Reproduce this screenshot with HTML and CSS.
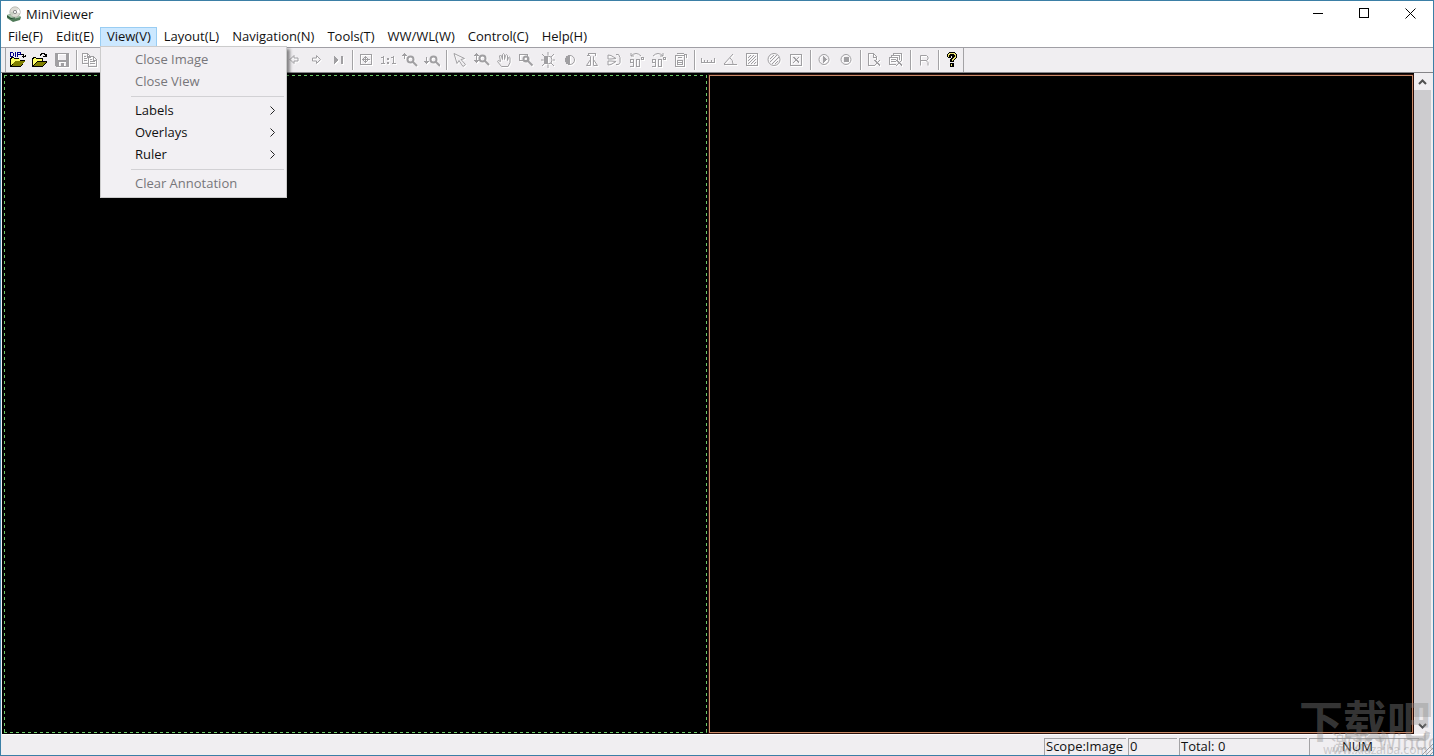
FILE: index.html
```
<!DOCTYPE html>
<html lang="en">
<head>
<meta charset="utf-8">
<title>MiniViewer</title>
<link rel="stylesheet" href="styles.css">
</head>

<body>

<div id="window">

	<div id="titlebar">
		<svg class="logo" width="16" height="16" viewBox="0 0 16 16">
			<path d="M1 9 L9 7 L15 11 L14 14 L7 16 L1 12z" fill="#4f7a58"/>
			<path d="M1 9 L9 8 L15 11 L7 13z" fill="#a9c7ad"/>
			<circle cx="9" cy="6" r="5.2" fill="#deddd6" stroke="#a9aaa2" stroke-width=".7"/>
			<path d="M9 6 L13 3 L14 7z" fill="#fff"/>
			<path d="M9 6 L4 6 L6 10z" fill="#c6cec1"/>
			<circle cx="9" cy="6" r="1.6" fill="#fff" stroke="#888"/>
			<path d="M1 10 q3 4 8 2" fill="none" stroke="#234c30"/>
		</svg>
		<h1>MiniViewer</h1>
		<button type="button" aria-label="Minimize"><svg width="11" height="11"><path d="M0 5.5h10"/></svg></button>
		<button type="button" aria-label="Maximize"><svg width="11" height="11"><path d="M.5 .5h9v9h-9z"/></svg></button>
		<button type="button" aria-label="Close"><svg width="11" height="11"><path class="smooth" d="M.5 .5l10 10M10.5 .5l-10 10"/></svg></button>
	</div>

	<ul id="menubar">
		<li><a href="#">File(F)</a></li>
		<li><a href="#">Edit(E)</a></li>
		<li class="open"><a href="#">View(V)</a>
			<ul>
				<li class="off"><a href="#">Close Image</a></li>
				<li class="off"><a href="#">Close View</a></li>
				<li class="line"></li>
				<li><a href="#">Labels<svg width="5" height="9"><path d="M.5 .5l4 4l-4 4"/></svg></a></li>
				<li><a href="#">Overlays<svg width="5" height="9"><path d="M.5 .5l4 4l-4 4"/></svg></a></li>
				<li><a href="#">Ruler<svg width="5" height="9"><path d="M.5 .5l4 4l-4 4"/></svg></a></li>
				<li class="line"></li>
				<li class="off"><a href="#">Clear Annotation</a></li>
			</ul>
		</li>
		<li><a href="#">Layout(L)</a></li>
		<li><a href="#">Navigation(N)</a></li>
		<li><a href="#">Tools(T)</a></li>
		<li><a href="#">WW/WL(W)</a></li>
		<li><a href="#">Control(C)</a></li>
		<li><a href="#">Help(H)</a></li>
	</ul>

	<div id="toolbar">
		<div class="tools">
			<button type="button" class="on" aria-label="Open folder"><svg viewBox="0 0 16 16">
				<path class="k" d="M0 6h1v-1h3v1h5v2h6v1l-4 6H0z"/><path d="M1 7h1v-1h2v1h6v2H5L1 13z" fill="#ff6"/><path d="M5 9h10l-4 5H2z" fill="#808000"/>
				<path d="M.5 0v5M1 .5h2M3.500 1v3M1 4.500h2M5.500 0v5M7.500 5V.5h3M8 2.500h2M10.500 1v2" stroke="#008" fill="none"/>
				<path d="M11 2.500h2.500v3M12 4.500h4M15.500 3v2" stroke="#000" fill="none"/></svg></button>
			<button type="button" class="on" aria-label="Open file"><svg viewBox="0 0 16 16">
				<path class="k" d="M0 6h1v-1h3v1h7v3h4v1l-4 5H0z"/><path d="M1 7h1v-1h2v1h6v2H5L1 13z" fill="#ff6"/><path d="M5 10h9l-4 4H2z" fill="#808000"/>
				<path d="M8.500 3.500v-1h1v-1h3v1h1v2M11 4.500h4M14.500 2v3" stroke="#000" fill="none"/></svg></button>
			<button type="button" aria-label="Save"><svg viewBox="0 0 16 16"><path class="f" fill-rule="evenodd" d="M1 1h14v14H2l-1-1zM4 2v6h8V2zM5 10v4h2v-3h3v3h2v-4z"/></svg></button>
			<i></i>
			<button type="button" aria-label="Copy"><svg viewBox="0 0 16 16"><path d="M6 11.500H.5v-10h5l3 3M5.500 2v3h3M2 4.500h2M2 6.500h3M2 8.500h3M6.500 4.500h5l3 3v7h-8zM11.500 5v3h3M8 7.500h2M8 9.500h5M8 11.500h5"/></svg></button>
			<button type="button" aria-label="Single view"><svg viewBox="0 0 16 16"><path d="M1.500 1.500h12v12h-12z"/></svg></button>
			<button type="button" aria-label="Two columns"><svg viewBox="0 0 16 16"><path d="M1.500 1.500h12v12h-12zM7.500 2v12"/></svg></button>
			<button type="button" aria-label="Two rows"><svg viewBox="0 0 16 16"><path d="M1.500 1.500h12v12h-12zM2 7.500h12"/></svg></button>
			<button type="button" aria-label="Four views"><svg viewBox="0 0 16 16"><path d="M1.500 1.500h12v12h-12zM2 7.500h12M7.500 2v12"/></svg></button>
			<button type="button" aria-label="Tile"><svg viewBox="0 0 16 16"><path d="M1.500 1.500h12v12h-12zM2 5.500h12M2 9.500h12"/></svg></button>
			<button type="button" aria-label="Page up"><svg viewBox="0 0 16 16"><path d="M3 8l5-5l5 5"/></svg></button>
			<button type="button" aria-label="Page down"><svg viewBox="0 0 16 16"><path d="M3 6l5 5l5-5"/></svg></button>
			<i></i>
			<button type="button" aria-label="First"><svg viewBox="0 0 16 16"><path class="f" d="M3 4h2v8H3zM12 4v8L7 8z"/></svg></button>
			<button type="button" aria-label="Previous"><svg viewBox="0 0 16 16"><path class="s" d="M4 7.500l4-4v2.500h4v3h-4v2.500z"/></svg></button>
			<button type="button" aria-label="Next"><svg viewBox="0 0 16 16"><path class="s" d="M12.500 7.500l-4-4v2.500h-4v3h4v2.500z"/></svg></button>
			<button type="button" aria-label="Last"><svg viewBox="0 0 16 16"><path class="f" d="M4 4v8l5-4zM11 4h2v8h-2z"/></svg></button>
			<i></i>
			<button type="button" aria-label="Fit to window"><svg viewBox="0 0 16 16"><path d="M2.500 2.500h11v10h-11zM4 7.500h8M7.500 4v7"/><path class="f" d="M5 6h1v3H5zM9 6h1v3H9zM6 5h3v1H6zM6 9h3v1H6z"/></svg></button>
			<button type="button" aria-label="Actual size"><svg viewBox="0 0 16 16"><path d="M1 5.500h2M3.500 4v8M13.500 4v8M11 5.500h2"/><path class="f" d="M7 6h2v2H7zM7 10h2v2H7zM1 11h4v1H1zM12 11h4v1h-4z"/></svg></button>
			<button type="button" aria-label="Zoom in"><svg viewBox="0 0 16 16"><path d="M2.500 1v6M1 2.500h3M0 3.500h5"/><circle class="t" cx="8.500" cy="7.500" r="3"/><path class="t" d="M11 10l4 4"/></svg></button>
			<button type="button" aria-label="Zoom out"><svg viewBox="0 0 16 16"><path d="M2.500 5v7M1 10.500h3M0 9.500h5"/><circle class="t" cx="9.500" cy="7.500" r="3"/><path class="t" d="M12 10l4 4"/></svg></button>
			<i></i>
			<button type="button" aria-label="Select"><svg viewBox="0 0 16 16"><path class="s" d="M2 1.500l3 10l2-3l4 6l2.500-2l-4.500-5l3.500-1z"/></svg></button>
			<button type="button" aria-label="Zoom"><svg viewBox="0 0 16 16"><path d="M2.500 1v10M1 2.500h3M0 3.500h5M0 8.500h5M1 9.500h3"/><circle class="t" cx="8.500" cy="6.500" r="3"/><path class="t" d="M11 9l4 4"/></svg></button>
			<button type="button" aria-label="Pan"><svg viewBox="0 0 16 16"><path class="s" d="M5.500 14.500l-4-5q0-2 3 0L3.500 4q1-2 2 0l1 3.500V2.500q1-2 2 0v5l1-4q1-2 2 0v5l1-3q1-1 1.500 0v5l-2 4z"/></svg></button>
			<button type="button" aria-label="Zoom region"><svg viewBox="0 0 16 16"><path d="M1.500 2.500h8v6h-8z"/><circle class="t" cx="8" cy="7" r="2.500"/><path class="t" d="M10 9l4.500 4.500"/></svg></button>
			<button type="button" aria-label="Brightness"><svg viewBox="0 0 16 16"><circle class="s" cx="8" cy="8" r="4"/><path class="f" d="M8 3.500a4.500 4.500 0 0 0 0 9z"/><path class="s" d="M8 0v3M8 13v3M1 8h2M13 8h2M2 2l3 3M11 11l3 3M2 14l3-3M11 5l3-3"/></svg></button>
			<button type="button" aria-label="Contrast"><svg viewBox="0 0 16 16"><circle class="s" cx="8" cy="8" r="4.500"/><path class="f" d="M8 3a5 5 0 0 0 0 10z"/></svg></button>
			<button type="button" aria-label="Flip horizontally"><svg viewBox="0 0 16 16"><path d="M4.500 4v-2.500h7v2.500M3 3.500h3"/><path class="s" d="M6.500 4.500v3l-4 6h4zM9.500 4.500v3l4 6h-4z"/></svg></button>
			<button type="button" aria-label="Flip vertically"><svg viewBox="0 0 16 16"><path class="s" d="M2 3v4h3l5-.5L5 3.500zM2 13v-4h3l5 .5L5 12.500zM10 2.500h2.500l1.500 3v5l-1.500 2H10"/></svg></button>
			<button type="button" aria-label="Rotate left"><svg viewBox="0 0 16 16"><path class="s" d="M3 4q5-5 10 0M3 1v3h3"/><path d="M2.500 7.500h3v3h-3zM5.500 10v4.500H2M8.500 7.500h3v7h-3zM13.500 5.500h2v2h-2z"/></svg></button>
			<button type="button" aria-label="Rotate right"><svg viewBox="0 0 16 16"><path class="s" d="M3 4q5-5 10 0M13 1v3h-3"/><path d="M2.500 7.500h3v3h-3zM5.500 10v4.500H2M8.500 7.500h3v7h-3zM13.500 5.500h2v2h-2z"/></svg></button>
			<button type="button" aria-label="Reset"><svg viewBox="0 0 16 16"><path d="M3.500 3.500h9v11h-9zM5 1.500h7M12 2.500h2v3M6 5.500h4M5.500 8.500h5v4h-5zM6 10.500h4"/></svg></button>
			<i></i>
			<button type="button" aria-label="Length"><svg viewBox="0 0 16 16"><path d="M1.500 6v4.500h13V6M4.500 8v2M7.500 8v2M11.500 8v2"/></svg></button>
			<button type="button" aria-label="Angle"><svg viewBox="0 0 16 16"><path d="M2 12.500h13"/><path class="s" d="M2 12L11 2M8 6q3 2 3 6"/></svg></button>
			<button type="button" aria-label="Rectangle"><svg viewBox="0 0 16 16"><path d="M2.500 1.500h11v12h-11z"/><path class="s" d="M4 6l3-3M4 9l6-6M4 12l8-8M7 12l5-5M10 12l2-2"/></svg></button>
			<button type="button" aria-label="Ellipse"><svg viewBox="0 0 16 16"><circle class="s" cx="8" cy="7.500" r="6"/><path class="s" d="M4 7l4-4M4 10l7-7M6 12l7-7M9 12l3-3"/></svg></button>
			<button type="button" aria-label="Delete mark"><svg viewBox="0 0 16 16"><path d="M2.500 2.500h11v11h-11z"/><path class="s" d="M5 5l6 6M6 5l5 5M11 5l-6 6"/></svg></button>
			<i></i>
			<button type="button" aria-label="Play"><svg viewBox="0 0 16 16"><circle class="s" cx="8" cy="7.500" r="5"/><path class="f" d="M7 4v7l4-3.500z"/></svg></button>
			<button type="button" aria-label="Stop"><svg viewBox="0 0 16 16"><circle class="s" cx="8" cy="7.500" r="5"/><path class="f" d="M6 5h5v5H6z"/></svg></button>
			<i></i>
			<button type="button" aria-label="Close image"><svg viewBox="0 0 16 16"><path d="M8 13.500H2.500v-12h5l3 3v3M7.500 2v3h3"/><path class="s" d="M8 8l6 6M9 8l5 5M14 8l-6 6"/></svg></button>
			<button type="button" aria-label="Close all"><svg viewBox="0 0 16 16"><path d="M5 3.500v-2h8v7M3 5.500v-2h8v4M8 12.500H1.500v-7h8v3M3 7.500h5M3 9.500h5"/><path class="s" d="M8 8l6 6M9 8l5 5M14 8l-6 6"/></svg></button>
			<i></i>
			<button type="button" aria-label="Reset all"><svg viewBox="0 0 16 16"><path class="s" d="M4.500 13.500v-10h6l1.500 1.500v2l-1.500 1.500h-6M10 8.500l2 2v3"/></svg></button>
			<i></i>
			<button type="button" class="on" aria-label="Help"><svg viewBox="0 0 16 16"><path class="k" d="M5 0h6v1h1v1h1v4h-1v1h-1v1h-1v2H6V7h1V6h1V4H7v2H4V5H3V2h1V1h1zM6 11h4v4H6z"/><path d="M4.500 4.500v-2h1v-1h5v1h1v3h-1v1h-1v1h-1v1.500M7.500 12v2" stroke="#e8e070" fill="none"/></svg></button>
		</div>
	</div>

	<div id="views">
		<div class="view focus"></div>
		<div class="view active"></div>
		<div class="scrollbar">
			<button type="button" aria-label="Scroll up"><svg width="9" height="6"><path d="M1 5l3.500-3.500L8 5"/></svg></button>
			<button type="button" aria-label="Scroll down"><svg width="9" height="6"><path d="M1 1l3.500 3.500L8 1"/></svg></button>
		</div>
	</div>

	<div id="statusbar">
		<span class="scope">Scope:Image</span>
		<span class="index">0</span>
		<span class="total">Total: 0</span>
		<span class="num">NUM</span>
		<svg class="grip" width="12" height="12"><path d="M1 12L12 1M5 12l7-7M9 12l3-3"/></svg>
	</div>

	<div id="watermark">
		<div class="name">下载吧</div>
		<div class="activate">激活 Windows</div>
		<div class="site">www.xiazaiba.com</div>
	</div>

</div>

</body>
</html>
```
FILE: styles.css
```
* {
	box-sizing: border-box;
}

body {
	margin: 0;
	font: 13px/18px "Open Sans", "Noto Sans CJK SC", sans-serif;
	color: #111;
}

button {
	display: flex;
	align-items: center;
	justify-content: center;
	padding: 0;
	border: 0;
	background: none;
}

svg {
	flex: none;
	fill: none;
	shape-rendering: crispEdges;
}

#window {
	position: relative;
	display: flex;
	flex-direction: column;
	height: 100vh;
	overflow: hidden;
	border: 1px solid #3b7fa6;
	background: #f0eef1;
}

/* title bar */

#titlebar {
	display: flex;
	align-items: center;
	height: 25px;
	padding-left: 5px;
	background: #fff;
}

#titlebar .logo {
	shape-rendering: auto;
}

h1 {
	flex: 1;
	margin: 0 0 0 4px;
	font-size: 13px;
	font-weight: normal;
}

#titlebar button {
	width: 46px;
	height: 25px;
}

#titlebar button path {
	stroke: #000;
}

#titlebar .smooth {
	shape-rendering: auto;
}

/* menus */

ul {
	margin: 0;
	padding: 0;
	list-style: none;
}

a {
	color: #111;
	text-decoration: none;
}

#menubar {
	display: flex;
	height: 22px;
	padding-top: 1px;
	background: #fff;
	border-bottom: 1px solid #a09fa5;
}

#menubar > li {
	position: relative;
}

#menubar > li > a {
	display: block;
	height: 20px;
	padding: 0 6px 0 7px;
}

#menubar > .open > a {
	padding: 0 5px 0 6px;
	border: 1px solid #99cdf3;
	line-height: 16px;
	background: #cce8ff;
}

#menubar ul {
	position: absolute;
	z-index: 2;
	top: 19px;
	left: 0;
	width: 187px;
	padding: 2px;
	border: 1px solid #ccc;
	background: #f2f0f3;
	box-shadow: 3px 3px 3px rgba(0, 0, 0, .45);
}

#menubar ul a {
	display: flex;
	align-items: center;
	justify-content: space-between;
	height: 22px;
	padding: 0 9px 2px 32px;
}

#menubar ul .off a {
	color: #77767a;
}

#menubar ul svg {
	stroke: #222;
	shape-rendering: auto;
}

.line {
	height: 1px;
	margin: 3px 0 3px 28px;
	background: #d2d1d4;
}

/* toolbar */

#toolbar {
	height: 25px;
	border-bottom: 1px solid #858488;
}

.tools {
	display: flex;
	align-items: center;
	width: max-content;
	height: 24px;
	padding-left: 1px;
	margin-left: 4px;
	border-left: 1px solid #a3a2a5;
	border-right: 1px solid #a3a2a5;
}

.tools button {
	width: 22px;
	height: 22px;
}

.tools i {
	width: 2px;
	height: 20px;
	margin: 0 1px 0 3px;
	border-left: 1px solid #a3a2a5;
	border-right: 1px solid #fff;
}

.tools svg {
	width: 16px;
	height: 16px;
	stroke: #a09fa2;
	filter: drop-shadow(1px 1px 0 #fff);
}

.tools .on svg {
	stroke: none;
	filter: none;
}

.tools .f {
	fill: #a09fa2;
	stroke: none;
}

.tools .k {
	fill: #000;
}

.tools .s,
.tools circle {
	shape-rendering: auto;
}

.tools .t {
	stroke-width: 2px;
	shape-rendering: auto;
}

/* image views */

#views {
	flex: 1;
	display: flex;
	margin: 0 2px 0 1px;
	background: #000;
	border-bottom: 1px solid #fff;
}

.view {
	flex: 1;
	margin: 2px 1px 1px 2px;
	border: 1px solid #c98a68;
	background: #000;
}

/* border-style can not give dashes of 3px on, 3px off */
.view.focus {
	border: 0;
	background:
		repeating-linear-gradient(to right, #6cc767 0 3px, #000 3px 6px) top / 100% 1px no-repeat,
		repeating-linear-gradient(to right, #6cc767 0 3px, #000 3px 6px) bottom / 100% 1px no-repeat,
		repeating-linear-gradient(to bottom, #6cc767 0 3px, #000 3px 6px) left / 1px 100% no-repeat,
		repeating-linear-gradient(to bottom, #6cc767 0 3px, #000 3px 6px) right / 1px 100% no-repeat,
		#000;
}

.view.active {
	margin-left: 1px;
	outline: 1px solid #2b100c;
}

.scrollbar {
	display: flex;
	flex-direction: column;
	justify-content: space-between;
	width: 17px;
	background: #cdcccf;
}

.scrollbar button {
	height: 17px;
	background: #f0eef1;
}

.scrollbar path {
	stroke: #505050;
	stroke-width: 2px;
	shape-rendering: auto;
}

/* status bar */

#statusbar {
	display: flex;
	justify-content: flex-end;
	gap: 2px;
	height: 20px;
	padding-top: 3px;
}

#statusbar span {
	height: 17px;
	padding-left: 1px;
	border-top: 1px solid #a3a2a5;
	border-left: 1px solid #a3a2a5;
	line-height: 15px;
	white-space: nowrap;
}

#statusbar .scope {
	width: 82px;
}

#statusbar .index {
	width: 49px;
}

#statusbar .total {
	width: 128px;
}

#statusbar .num {
	width: 110px;
	padding-left: 32px;
}

#statusbar .grip {
	align-self: flex-end;
	stroke: #a3a2a5;
	shape-rendering: auto;
}

/* watermark over the bottom right corner */

#watermark {
	position: absolute;
	right: 0;
	bottom: 0;
	width: 134px;
	height: 58px;
	overflow: hidden;
	color: rgba(140, 140, 140, .4);
	font-family: "Noto Sans CJK SC", sans-serif;
	white-space: nowrap;
	pointer-events: none;
}

#watermark .name {
	font-size: 44px;
	line-height: 44px;
	font-weight: bold;
}

#watermark .activate {
	margin: -11px 0 0 32px;
	font-size: 21px;
	line-height: 22px;
}

#watermark .site {
	margin: -9px 0 0 24px;
	font-size: 12px;
	line-height: 12px;
}
```
